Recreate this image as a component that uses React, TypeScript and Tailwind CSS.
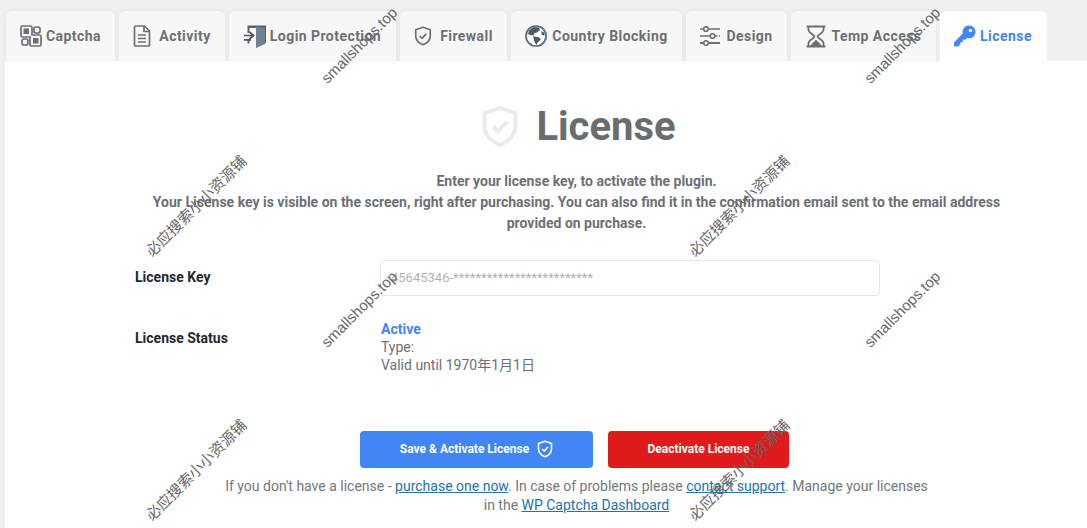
import React from "react";

const S = "#6c7075";
const Cap = () => (
  <svg width="22" height="22" viewBox="0 0 22 22" fill="none" stroke={S} strokeWidth="1.7">
    <path d="M2.500 1h8a1.500 1.500 0 0 1 1.500 1.500V10h7.500a1.500 1.500 0 0 1 1.500 1.500v8a1.500 1.500 0 0 1-1.500 1.500h-8a1.500 1.500 0 0 1-1.500-1.500V12H2.500A1.500 1.500 0 0 1 1 10.500v-8A1.500 1.500 0 0 1 2.500 1z" />
    <rect x="3.500" y="3.500" width="5.500" height="5.500" fill={S} stroke="none" />
    <rect x="14" y="2" width="6" height="6" rx="2" />
    <rect x="13" y="13" width="5.500" height="5.500" fill={S} stroke="none" />
    <rect x="2" y="14" width="6" height="6" rx="2" />
  </svg>
);
const Doc = () => (
  <svg width="18" height="22" viewBox="0 0 18 22" fill="none" stroke={S} strokeWidth="1.7">
    <path d="M2.500 1h9l5 5v14a1 1 0 0 1-1 1h-13a1 1 0 0 1-1-1V2a1 1 0 0 1 1-1z" /><path d="M11 1v5.500h5.500M5 10h8M5 13.500h8M5 17h8" />
  </svg>
);
const Door = () => (
  <svg width="22" height="23" viewBox="0 0 22 23" fill="none">
    <path d="M3.500 0.500H22V18h-3V3H5.500v5h-2z M3.500 15h2v3.500h-2z" fill="#5c6167" />
    <path d="M12 2l9 1v16l-9 4z" fill="#6f8194" />
    <path d="M0 10.500h8M5.500 7l4 3.500-4 3.500M0 14.800h7" stroke="#4f5459" strokeWidth="1.700" />
  </svg>
);
const Shield = ({ c = S, w = 18, h = 20, sw = 1.7 }: { c?: string; w?: number; h?: number; sw?: number }) => (
  <svg width={w} height={h} viewBox="0 0 18 20" fill="none" stroke={c} strokeWidth={sw}>
    <path d="M9 1.200l7.300 2.500v6c0 4.300-3 7.300-7.300 9-4.300-1.700-7.300-4.700-7.300-9v-6z" strokeLinejoin="round" /><path d="M5.800 10l2.300 2.300 4.200-4.600" />
  </svg>
);
const Globe = () => (
  <svg width="22" height="22" viewBox="0 0 22 22">
    <circle cx="11" cy="11" r="10" fill="#fff" stroke="#5f6469" strokeWidth="1.700" />
    <path d="M16 2.300a10 10 0 0 1 0 17.400" fill="none" stroke="#4a86c5" strokeWidth="1.700" />
    <path d="M4 5.500L8.500 2l5.500.500 1 2.500-3 2.500-2.500.500-1 2.500-3.500-.500L3 9zM8 11.500l5.500.500 2.500 2.500-3 2.500-1.500 3-2-3zM16.500 6l2.500 1.500.500 3-3-.500z" fill="#555a60" />
  </svg>
);
const Sliders = () => (
  <svg width="21" height="20" viewBox="0 0 21 20" fill="none" stroke={S} strokeWidth="1.600">
    <circle cx="6" cy="3" r="2.300" /><path d="M0 3h3.500M9 3h11" />
    <circle cx="12.500" cy="10" r="2.300" /><path d="M0 10h10M15 10h2.500M19 10h1" />
    <circle cx="6" cy="17" r="2.300" /><path d="M0 17h3.500M9 17h11" strokeWidth="2" />
  </svg>
);
const Glass = () => (
  <svg width="20" height="23" viewBox="0 0 20 23" fill="none" stroke={S} strokeWidth="1.800">
    <path d="M0.500 1.500h19M0.500 21.500h19M2.500 1.500v3.500c0 3 6 4.500 6 6.500s-6 3.500-6 6.500v3.500M17.500 1.500v3.500c0 3-6 4.500-6 6.500s6 3.500 6 6.500v3.500" />
    <path d="M4 21l6-6.500 6 6.500z" fill={S} stroke="none" />
  </svg>
);
const KeyIcon = () => (
  <svg width="22" height="22" viewBox="0 0 24 23">
    <path fillRule="evenodd" d="M16.500 0a7 7 0 1 1-2.400 13.600L12 15.700h-2.500v2.500H7v2.300L4.500 23H1l-1-1v-3.500l9.600-9.600A7 7 0 0 1 16.500 0zm1.500 3.500a2 2 0 1 0 0 4 2 2 0 0 0 0-4z" fill="#4285f4" />
  </svg>
);

const tabs: { t: string; w: string; gap: string; icon: React.ReactNode }[] = [
  { t: "Captcha", w: "w-[109px]", gap: "gap-[4px]", icon: <Cap /> },
  { t: "Activity", w: "w-[106px]", gap: "gap-[8px]", icon: <Doc /> },
  { t: "Login Protection", w: "w-[167px]", gap: "gap-[4px]", icon: <Door /> },
  { t: "Firewall", w: "w-[107px]", gap: "gap-[8px]", icon: <Shield /> },
  { t: "Country Blocking", w: "w-[171px]", gap: "gap-[5px]", icon: <Globe /> },
  { t: "Design", w: "w-[101px]", gap: "gap-[5px]", icon: <Sliders /> },
  { t: "Temp Access", w: "w-[145px]", gap: "gap-[6px]", icon: <Glass /> },
];

const marks = [
  { c: "left-[359px] top-[45px]", t: "smallshops.top" },
  { c: "left-[902px] top-[45px]", t: "smallshops.top" },
  { c: "left-[359px] top-[309px]", t: "smallshops.top" },
  { c: "left-[902px] top-[309px]", t: "smallshops.top" },
  { c: "left-[196px] top-[206px]", t: "必应搜索小小资源铺" },
  { c: "left-[739px] top-[206px]", t: "必应搜索小小资源铺" },
  { c: "left-[196px] top-[470px]", t: "必应搜索小小资源铺" },
  { c: "left-[739px] top-[470px]", t: "必应搜索小小资源铺" },
];

export default function App() {
  return (
    <div className="relative h-[528px] w-[1087px] overflow-hidden bg-[#f0f0f1] font-['Roboto','Noto_Sans_CJK_SC',sans-serif] text-[14px]">
      <div className="flex h-[61px] items-end gap-[4px] pl-[6px]">
        {tabs.map((x) => (
          <div key={x.t} className={`${x.w} ${x.gap} flex h-[50px] shrink-0 items-center justify-center rounded-t-[6px] bg-[#f7f7f7] font-bold tracking-[0.45px] text-[#6c7075] shadow-[0_0_5px_rgba(0,0,0,0.06)]`}>
            {x.icon}
            <span>{x.t}</span>
          </div>
        ))}
        <div className="flex h-[50px] w-[107px] shrink-0 items-center justify-center gap-[4px] rounded-t-[6px] bg-white pr-[1px] font-bold tracking-[0.45px] text-[#4285f4]">
          <KeyIcon />
          <span>License</span>
        </div>
      </div>
      <div className="ml-[5px] h-[467px] bg-white text-[#6c7075]">
        <div className="flex h-[100px] items-center justify-center gap-[17px] pl-[65px] pt-[30px]">
          <Shield c="#e9ebec" w={38} h={43} sw={1.9} />
          <h1 className="text-[40px] font-bold leading-[47px] text-[#6a6d70]">License</h1>
        </div>
        <div className="ml-[141px] w-[861px] pt-[10px] text-center font-bold leading-[21px] text-[#6c7075]">
          <p>Enter your license key, to activate the plugin.</p>
          <p>Your License key is visible on the screen, right after purchasing. You can also find it in the confirmation email sent to the email address provided on purchase.</p>
        </div>
        <div className="ml-[130px] mt-[26px] flex items-center">
          <div className="w-[245px] pb-[2px] font-bold text-[#23282d]">License Key</div>
          <div className="flex h-[36px] w-[500px] items-center rounded-[4px] border border-[#e6e7e8] pl-[10px] text-[13px] text-[#b0b2b4]">45645346-*************************</div>
        </div>
        <div className="ml-[130px] mt-[24px] flex items-start">
          <div className="w-[245px] pt-[8px] font-bold text-[#23282d]">License Status</div>
          <div className="pl-px leading-[18px] text-[#6c7075]">
            <div className="font-bold text-[#4285f4]">Active</div>
            <div>Type:</div>
            <div>Valid until 1970年1月1日</div>
          </div>
        </div>
        <div className="ml-[355px] mt-[57px] flex gap-[15px]">
          <div className="flex h-[37px] w-[233px] items-center justify-center gap-[8px] rounded-[4px] bg-[#4285f4] pb-[1px] text-[12px] font-bold text-white">
            <span>Save &amp; Activate License</span>
            <Shield c="#fff" w={16} h={18} sw={1.8} />
          </div>
          <div className="flex h-[37px] w-[181px] items-center justify-center rounded-[4px] bg-[#e01b1b] pb-[1px] text-[12px] font-bold text-white">Deactivate License</div>
        </div>
        <div className="ml-[216px] mt-[9px] w-[711px] text-center leading-[19px] text-[#73777b]">
          If you don't have a license - <a className="text-[#2271b1] underline">purchase one now</a>. In case of problems please <a className="text-[#2271b1] underline">contact support</a>. Manage your licenses in the <a className="text-[#2271b1] underline">WP Captcha Dashboard</a>
        </div>
      </div>
      {marks.map((m, i) => (
        <div key={i} className={`${m.c} pointer-events-none absolute -translate-x-1/2 -translate-y-1/2 -rotate-45 whitespace-nowrap font-['Liberation_Sans','Noto_Sans_CJK_SC',sans-serif] text-[15px] leading-none text-[#666]`}>{m.t}</div>
      ))}
    </div>
  );
}
